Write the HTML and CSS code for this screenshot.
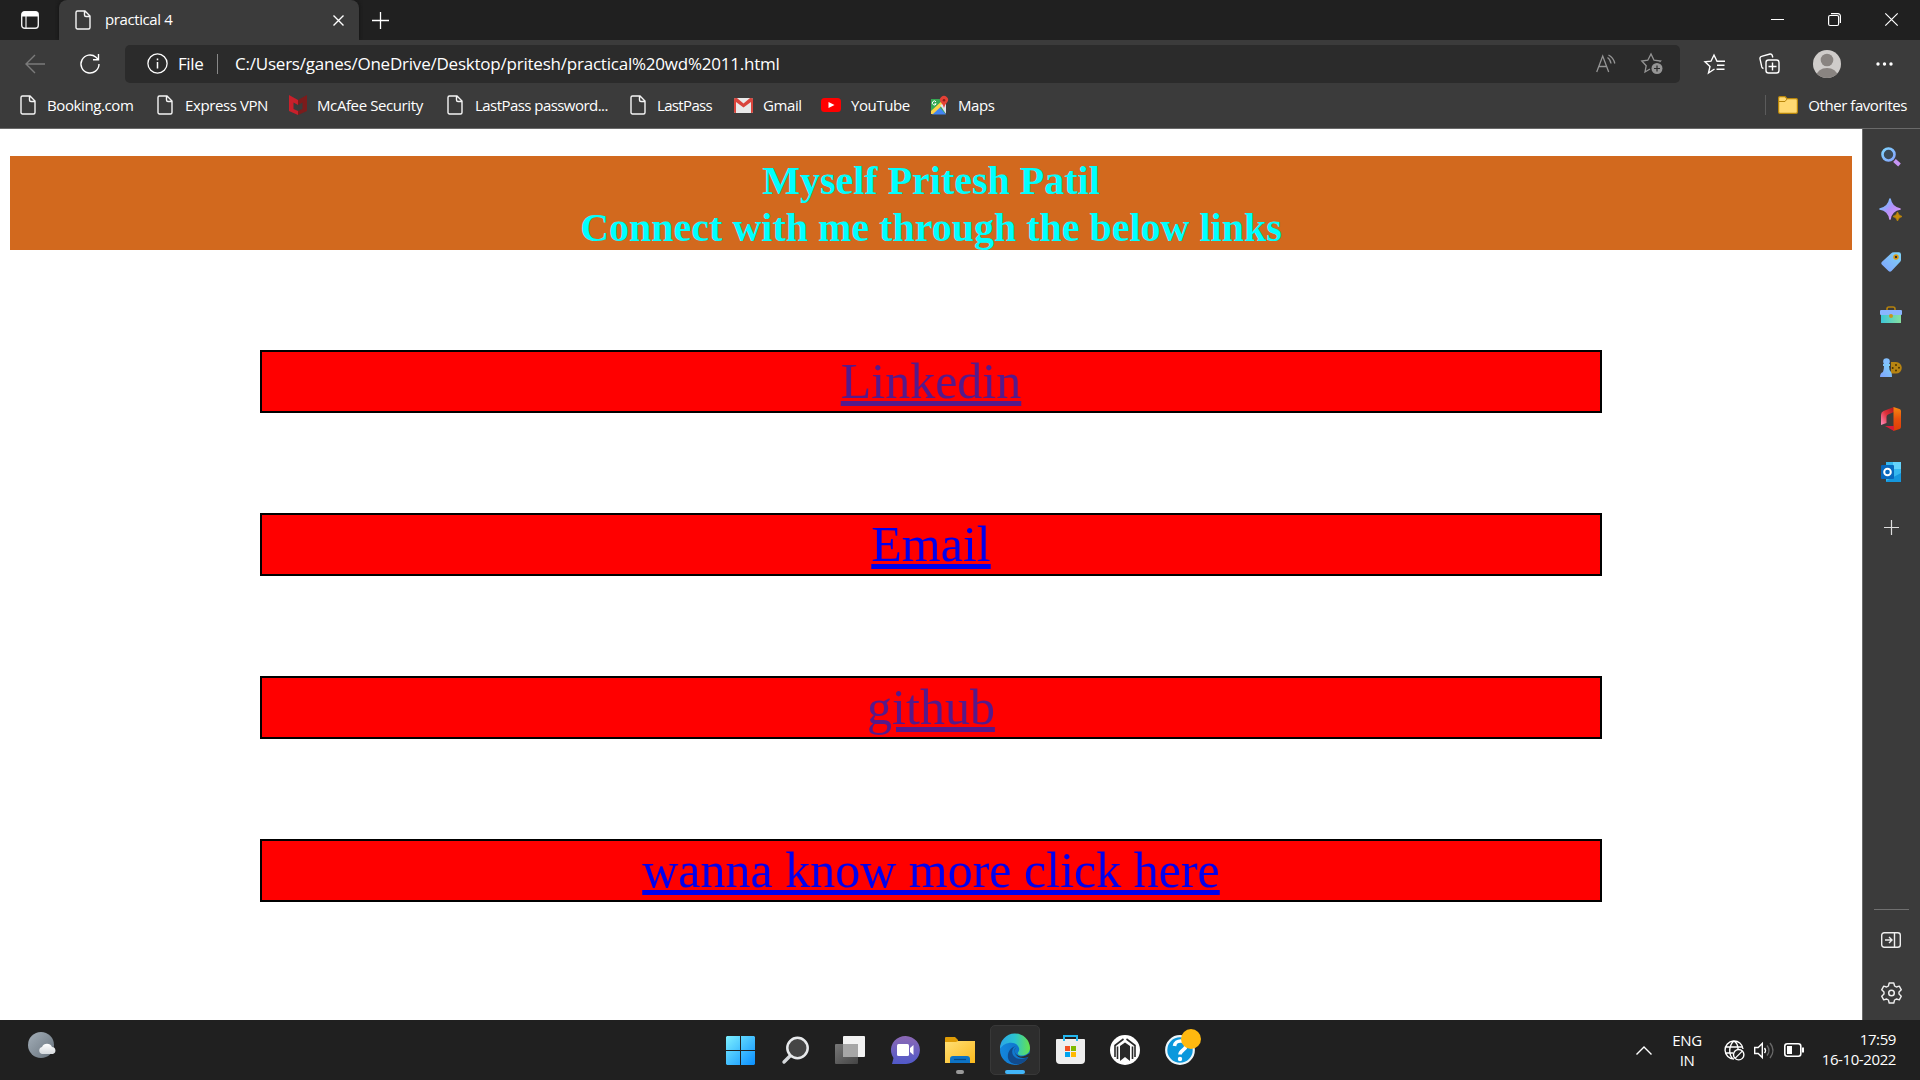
FILE: index.html
```html
<!DOCTYPE html>
<html lang="en">
<head>
<meta charset="utf-8">
<title>practical 4</title>
<link rel="stylesheet" href="styles.css">
</head>
<body>
<svg class="defs" aria-hidden="true">
  <defs>
    <linearGradient id="win" x1="0" y1="0" x2="1" y2="1"><stop offset="0" stop-color="#7df0ff"/><stop offset="1" stop-color="#0a8fff"/></linearGradient>
    <linearGradient id="lens" x1="0" y1="0" x2="1" y2="1"><stop offset="0" stop-color="#7fd4ff"/><stop offset="1" stop-color="#86a4ff"/></linearGradient>
    <linearGradient id="violet" x1="0" y1="0" x2="1" y2="1"><stop offset=".15" stop-color="#6fc4ff"/><stop offset=".5" stop-color="#b490fb"/><stop offset="1" stop-color="#e79bf5"/></linearGradient>
    <linearGradient id="blue" x1="1" y1="0" x2="0" y2="1"><stop offset="0" stop-color="#7fd4f5"/><stop offset="1" stop-color="#7fa2ff"/></linearGradient>
    <linearGradient id="teal"><stop offset="0" stop-color="#3cc6d8"/><stop offset="1" stop-color="#86e0a0"/></linearGradient>
    <linearGradient id="chat" x1="0" y1="0" x2="0" y2="1"><stop offset="0" stop-color="#8c68b4"/><stop offset="1" stop-color="#5059c9"/></linearGradient>
    <linearGradient id="folder" x1="0" y1="0" x2="1" y2="1"><stop offset="0" stop-color="#ffdf75"/><stop offset="1" stop-color="#fbb91c"/></linearGradient>
    <linearGradient id="edgeTop"><stop offset="0" stop-color="#2ba5e8"/><stop offset=".5" stop-color="#2bc4cf"/><stop offset="1" stop-color="#66e34b"/></linearGradient>
    <linearGradient id="edgeLow"><stop offset="0" stop-color="#1488de"/><stop offset="1" stop-color="#0c68c0"/></linearGradient>
    <linearGradient id="officeLeft" x1="1" y1="0" x2="0" y2="1"><stop offset="0" stop-color="#a8151d"/><stop offset=".5" stop-color="#e0323c"/><stop offset="1" stop-color="#ff8fc0"/></linearGradient>
    <linearGradient id="officeRight" x1="0" y1="0" x2="0" y2="1"><stop offset="0" stop-color="#f58a10"/><stop offset=".5" stop-color="#e8500c"/><stop offset="1" stop-color="#de3c06"/></linearGradient>
    <linearGradient id="moon" x1="0" y1="0" x2="1" y2="1"><stop offset="0" stop-color="#a4afb9"/><stop offset="1" stop-color="#66717b"/></linearGradient>
    <linearGradient id="white" x1="0" y1="0" x2="0" y2="1"><stop offset="0" stop-color="#fff"/><stop offset="1" stop-color="#d5d9dd"/></linearGradient>
    <linearGradient id="grey" x1="0" y1="0" x2="1" y2="1"><stop offset="0" stop-color="#777"/><stop offset="1" stop-color="#444"/></linearGradient>
    <symbol id="doc" viewBox="0 0 16 20"><path d="M3 1h7l5 5v11.500a1.500 1.500 0 0 1-1.500 1.500h-11A1.500 1.500 0 0 1 1 17.500v-15A1.500 1.500 0 0 1 2.500 1zM9.500 1v4a1.500 1.500 0 0 0 1.500 1.500h4" fill="none" stroke="#f5f5f5" stroke-width="1.400"/></symbol>
  </defs>
</svg>
<header class="browser">
  <div class="titlebar">
    <svg class="tab-actions" width="18" height="18" viewBox="0 0 18 18"><rect x=".7" y=".7" width="16.600" height="16.600" rx="3" fill="none" stroke="#eee" stroke-width="1.400"/><path d="M1 3a2.500 2.500 0 0 1 2.500-2.500h11A2.500 2.500 0 0 1 17 3v2.500H1z" fill="#fff"/><path d="M5 5v12" stroke="#eee" stroke-width="1.200"/></svg>
    <div class="tab">
      <svg width="16" height="20"><use href="#doc"/></svg>
      <span class="tab-title">practical 4</span>
      <svg class="tab-close" width="11" height="11" viewBox="0 0 11 11"><path d="M.5.5l10 10M10.500.5l-10 10" stroke="#fff" stroke-width="1.400"/></svg>
    </div>
    <svg class="new-tab" width="17" height="17" viewBox="0 0 17 17"><path d="M8.500 0v17M0 8.500h17" stroke="#fff" stroke-width="1.300"/></svg>
    <div class="window-buttons">
      <svg width="13" height="13" viewBox="0 0 13 13"><path d="M0 6.500h13" stroke="#fff"/></svg>
      <svg width="13" height="13" viewBox="0 0 13 13"><rect x=".6" y="2.500" width="10" height="10" rx="1.500" fill="none" stroke="#fff" stroke-width="1.200"/><path d="M3 .6h7a2.400 2.400 0 0 1 2.400 2.400v7" fill="none" stroke="#fff" stroke-width="1.200"/></svg>
      <svg width="13" height="13" viewBox="0 0 13 13"><path d="M.3.3l12.400 12.400M12.700.3L.3 12.700" stroke="#fff" stroke-width="1.200"/></svg>
    </div>
  </div>
  <div class="toolbar">
    <svg class="back" width="20" height="20" viewBox="0 0 20 20"><path d="M20 10H1M10 1l-9 9 9 9" fill="none" stroke="#7b7b7b" stroke-width="1.400"/></svg>
    <svg class="reload" width="20" height="20" viewBox="0 0 20 20"><path d="M19 10a9 9 0 1 1-3-6.700l2 2M18.500 0v5.700H13" fill="none" stroke="#fff" stroke-width="1.400"/></svg>
    <div class="address">
      <svg width="21" height="21" viewBox="0 0 21 21"><circle cx="10.500" cy="10.500" r="9.600" fill="none" stroke="#fff" stroke-width="1.300"/><path d="M10.500 9v6.500M10.500 5.500v1.700" stroke="#fff" stroke-width="1.500"/></svg>
      <span class="scheme">File</span>
      <span class="address-rule"></span>
      <span class="url">C:/Users/ganes/OneDrive/Desktop/pritesh/practical%20wd%2011.html</span>
      <svg class="read" width="20" height="19" viewBox="0 0 20 19"><path d="M.7 18L6.700 2l6 16M3 12.500h7.500M11.500 3.500q3 2 3.500 6M12.500 1q5 2.500 6.300 8.500" fill="none" stroke="#959595" stroke-width="1.300"/></svg>
      <svg class="star" width="22" height="21" viewBox="0 0 22 21"><path d="M9 16l-5 3 1.200-6.300L.8 8l6-.8L10 1l3 6.200 6.500.8-1 1" fill="none" stroke="#959595" stroke-width="1.300"/><circle cx="16" cy="15.500" r="5.500" fill="#959595"/><path d="M16 12.500v6M13 15.500h6" stroke="#2b2b2b" stroke-width="1.200"/></svg>
    </div>
    <svg class="favorites" width="21" height="20" viewBox="0 0 21 20"><path d="M10.500 15l-6 4 1.500-6.500-5-4.700 6-.6L10 1l3 6.200h8M13 11.200h7.500M12.500 15.200h8" fill="none" stroke="#fff" stroke-width="1.400"/></svg>
    <svg class="collections" width="21" height="21" viewBox="0 0 21 21"><rect x="7" y="7" width="13" height="13" rx="2.500" fill="none" stroke="#fff" stroke-width="1.400"/><path d="M13.500 9.500v8M9.500 13.500h8M4.500 15.500a2.500 2.500 0 0 1-1.700-1.600L1 5.800a2 2 0 0 1 1.500-2.400L11 1a2 2 0 0 1 2.200 1.300l.6 2.200" fill="none" stroke="#fff" stroke-width="1.400"/></svg>
    <svg class="avatar" width="28" height="28" viewBox="0 0 28 28"><clipPath id="face"><circle cx="14" cy="14" r="14"/></clipPath><g clip-path="url(#face)"><path fill="#cfccca" d="M0 0h28v28H0z"/><circle cx="14" cy="10" r="6.300" fill="#898481"/><ellipse cx="14" cy="26" rx="10.500" ry="8" fill="#898481"/></g></svg>
    <svg class="menu" width="17" height="4" viewBox="0 0 17 4"><path d="M2 2h0M8.500 2h0M15 2h0" stroke="#fff" stroke-width="3.400" stroke-linecap="round"/></svg>
  </div>
  <nav class="bookmarks">
    <div class="bookmark booking"><svg width="16" height="20"><use href="#doc"/></svg>Booking.com</div>
    <div class="bookmark express"><svg width="16" height="20"><use href="#doc"/></svg>Express VPN</div>
    <div class="bookmark mcafee"><svg width="18" height="20" viewBox="0 0 18 20"><path d="M0 0l9 5v5L4.500 7.500V14L9 16v4l-9-4z" fill="#c8202b"/><path d="M18 0L9 5v5l4.500-2.500V14L9 16v4l9-4z" fill="#7b1c1c"/></svg>McAfee Security</div>
    <div class="bookmark password"><svg width="16" height="20"><use href="#doc"/></svg>LastPass password...</div>
    <div class="bookmark lastpass"><svg width="16" height="20"><use href="#doc"/></svg>LastPass</div>
    <div class="bookmark gmail"><svg width="19" height="15" viewBox="0 0 19 15"><rect width="19" height="15" rx="1.500" fill="#e9e9e9"/><path d="M0 1.500Q0 0 1.500 0H3l6.500 5.500L16 0h1.500Q19 0 19 1.500v12q0 1.500-1.500 1.500H17V4L9.500 9.500 2 4v11h-.5Q0 15 0 13.500z" fill="#d9453d"/></svg>Gmail</div>
    <div class="bookmark youtube"><svg width="20" height="14" viewBox="0 0 20 14"><rect width="20" height="14" rx="3.500" fill="#f00"/><path d="M7.500 4l6 3-6 3z" fill="#fff"/></svg>YouTube</div>
    <div class="bookmark maps"><svg width="18" height="19" viewBox="0 0 18 19"><path d="M1 3h14v15H1z" fill="#34a853"/><path d="M8.500 10l7.500 8.500H2z" fill="#4285f4"/><path d="M1 18V15L14 3l2 3L3 18z" fill="#fbd24a"/><path d="M10 9l6-2v11z" fill="#dfe3ee"/><path d="M6 5.800a2 2 0 1 0 .2 2H4.500" fill="none" stroke="#fff"/><path d="M14 12q-.5-3-3-5.500a4 4 0 1 1 6 0Q14.500 9 14 12z" fill="#e44136"/><circle cx="14" cy="4.200" r="1.300" fill="#8b2019"/></svg>Maps</div>
    <div class="other"><svg width="20" height="18" viewBox="0 0 20 18"><path d="M.6 2a1.400 1.400 0 0 1 1.400-1.400h5L9 2.600h9A1.400 1.400 0 0 1 19.400 4v12a1.400 1.400 0 0 1-1.400 1.400H2A1.400 1.400 0 0 1 .6 16z" fill="#ffd972" stroke="#b8860b" stroke-width="1.200"/><path d="M1 5.500h6L9 3" fill="none" stroke="#b8860b"/></svg>Other favorites</div>
  </nav>
</header>
<div class="middle">
  <main class="page">
    <h1>Myself Pritesh Patil<br>Connect with me through the below links</h1>
    <div class="box"><a class="visited" href="#l">Linkedin</a></div>
    <div class="box"><a href="#e">Email</a></div>
    <div class="box"><a class="visited" href="#g">github</a></div>
    <div class="box"><a href="#m">wanna know more click here</a></div>
  </main>
  <aside class="sidebar">
    <div class="side-icon search"><svg width="20" height="20" viewBox="0 0 20 20"><path d="M13.500 13.500l5 4.500" stroke="#c694f5" stroke-width="4"/><circle cx="7.500" cy="7.500" r="6" fill="#3b4a56" stroke="url(#lens)" stroke-width="2.600"/></svg></div>
    <div class="side-icon"><svg width="22" height="22" viewBox="0 0 22 22"><path d="M10 0Q11.500 8.500 20 10 11.500 11.500 10 20 8.500 11.500 0 10 8.500 8.500 10 0z" fill="url(#violet)" stroke="url(#violet)" stroke-width="1.600" stroke-linejoin="round"/><path d="M17.500 13q.8 3.700 4.500 4.500-3.700.8-4.500 4.500-.8-3.700-4.500-4.500 3.700-.8 4.500-4.500z" fill="#c68b08" stroke="#c68b08" stroke-width=".8"/></svg></div>
    <div class="side-icon"><svg width="20" height="20" viewBox="0 0 20 20"><path d="M10 1.500Q11 .3 13 .3h4.500A2.300 2.300 0 0 1 20 2.500V8q0 1.200-1 2l-8.500 9Q9 20.500 7.500 19L.8 12.500Q-.3 11.300.8 10z" fill="url(#blue)"/><circle cx="15" cy="5" r="2" fill="#333" stroke="#e29a08" stroke-width="1.500"/></svg></div>
    <div class="side-icon"><svg width="22" height="17" viewBox="0 0 22 17"><path d="M7 5V3q0-2 2-2h4q2 0 2 2v2" fill="none" stroke="#b5810c" stroke-width="1.600"/><path d="M1 8h20v9H1z" fill="url(#teal)"/><rect y="4" width="22" height="5" rx="1" fill="#8ab5ff"/><circle cx="11" cy="10" r="2" fill="#c99619"/></svg></div>
    <div class="side-icon"><svg width="22" height="19" viewBox="0 0 22 19"><path d="M11 4h5a5.800 5.800 0 0 1 0 11.600h-5z" fill="#b78412"/><path d="M12.700 10h0M16 7h0M16 12.500h0M19 9.700h0" stroke="#4b3300" stroke-width="2" stroke-linecap="round"/><circle cx="6.500" cy="3.500" r="3.300" fill="#83bfff"/><path d="M3 6h7v2H9q0 4 2 6 1 1 1 5H0q0-4 3-5 1-3 1-6H3z" fill="url(#blue)"/></svg></div>
    <div class="side-icon"><svg width="20" height="24" viewBox="0 0 20 24"><path d="M0 8q0-3 2.500-4L13 0v5L7 7.500q-1.500.7-1.500 2.500v6L0 18z" fill="url(#officeLeft)"/><path d="M12.500 0l6 2Q20 2.500 20 4v16q0 1.500-1.500 2l-6 2z" fill="url(#officeRight)"/><path d="M4 19h9v5z" fill="#d81c38"/></svg></div>
    <div class="side-icon"><svg width="20" height="20" viewBox="0 0 20 20"><path d="M5 0h15v20H5z" fill="#35b8ef"/><path d="M12 0h8v7h-8z" fill="#64d2fb"/><path d="M5 19l15-8v9H5z" fill="#1597de"/><rect y="3" width="13" height="14" rx="1" fill="#0868bd"/><circle cx="6.500" cy="10" r="3.300" fill="none" stroke="#fff" stroke-width="2"/></svg></div>
    <div class="side-icon add"><svg width="15" height="15" viewBox="0 0 15 15"><path d="M7.500 0v15M0 7.500h15" stroke="#ddd" stroke-width="1.200"/></svg></div>
    <hr>
    <div class="side-icon panel"><svg width="20" height="16" viewBox="0 0 20 16"><rect x=".7" y=".7" width="18.600" height="14.600" rx="2.500" fill="none" stroke="#eee" stroke-width="1.400"/><path d="M13.500 1v14M4 8h7M8 5l3 3-3 3" fill="none" stroke="#eee" stroke-width="1.400"/></svg></div>
    <div class="side-icon settings"><svg width="21" height="22" viewBox="0 0 21 22"><path d="M8.200 1h4.600l.8 3 1.700 1 3-.9 2 3.700L18 10v2l2.300 2.200-2 3.700-3-.9-1.700 1-.8 3H8.200l-.8-3-1.700-1-3 .9-2-3.700L3 12v-2L.7 7.800l2-3.700 3 .9 1.700-1z" fill="none" stroke="#eee" stroke-width="1.400" stroke-linejoin="round"/><circle cx="10.500" cy="11" r="2.800" fill="none" stroke="#eee" stroke-width="1.500"/></svg></div>
  </aside>
</div>
<footer class="taskbar">
  <svg class="weather" width="28" height="27" viewBox="0 0 28 27"><circle cx="13" cy="13" r="13" fill="url(#moon)"/><path d="M14 22a3.600 3.600 0 0 1 0-7 5.500 5.500 0 0 1 10 0 3.600 3.600 0 0 1 1 7z" fill="url(#white)"/></svg>
  <div class="apps">
    <div class="app"><svg width="29" height="29" viewBox="0 0 29 29"><path d="M1 0h13v14H0V1zM15 0h13l1 1v13H15zM0 15h14v14H1l-1-1zM15 15h14v13l-1 1H15z" fill="url(#win)"/></svg></div>
    <div class="app"><svg width="27" height="28" viewBox="0 0 27 28"><path d="M8.500 19.500L2 26" stroke="#d5d8db" stroke-width="3.400" stroke-linecap="round"/><circle cx="15.500" cy="12" r="10.200" fill="#454545" stroke="#e7e9eb" stroke-width="2.500"/></svg></div>
    <div class="app"><svg width="30" height="28" viewBox="0 0 30 28"><rect y="8" width="23" height="20" rx="1" fill="url(#grey)"/><rect x="8" width="22" height="21" rx="1" fill="#f2f2f2"/><path d="M8 8h15v13H8z" fill="#a6a6a6"/></svg></div>
    <div class="app"><svg width="29" height="29" viewBox="0 0 29 29"><path d="M1 28l1.500-6A14.500 14 0 1 1 15 28z" fill="url(#chat)"/><rect x="6" y="8" width="12" height="12" rx="1.500" fill="#fff"/><path d="M19 12l3.500-3v10L19 16z" fill="#fff"/></svg></div>
    <div class="app"><svg width="30" height="27" viewBox="0 0 30 27"><path d="M0 1q0-1 1-1h9l3 3v6H0z" fill="#df9c06"/><path d="M0 5h11l2-1h17v22H0z" fill="url(#folder)"/><path d="M5 26v-4q0-3 3-3h14q3 0 3 3v4z" fill="#0d73c5"/><path d="M9 22.500h12" stroke="#074985" stroke-width="1.200"/></svg><span class="running"></span></div>
    <div class="app active"><svg width="30" height="30" viewBox="0 0 30 30"><circle cx="15" cy="15" r="15" fill="url(#edgeLow)"/><path d="M0 14A15 15 0 0 1 30 13c0 8-10 9-12 6-1-2 2-2 1-6C17 6 5 6 0 14z" fill="url(#edgeTop)"/><path d="M16 11c-3 1-5 5-3 9 3 5 10 5 15 2-5 10-18 9-20 1-1-6 3-11 8-12z" fill="#114b8d"/><path d="M17 12c-3 2-3 6 0 8 4 3 9 1 11-1l3-1v3l-3 1c-5 2-11 1-13-4-1-3 0-5 2-6z" fill="#2d2d2d"/></svg><span class="running"></span></div>
    <div class="app"><svg width="29" height="30" viewBox="0 0 29 30"><path d="M8 6V1h13v5" fill="none" stroke="#24b7ef" stroke-width="2"/><path d="M0 5q0-1 1-1h27q1 0 1 1v20q0 4-4 4H4q-4 0-4-4z" fill="#eee"/><path d="M8 6V4M21 6V4" stroke="#24b7ef" stroke-width="2"/><path d="M9 11h5v5H9z" fill="#f25022"/><path d="M15 11h5v5h-5z" fill="#7fba00"/><path d="M9 17h5v5H9z" fill="#00a4ef"/><path d="M15 17h5v5h-5z" fill="#ffb900"/></svg></div>
    <div class="app"><svg width="30" height="30" viewBox="0 0 30 30"><circle cx="15" cy="15" r="15" fill="#fff"/><path d="M10 26V11l5-3.500 5 3.500v15l-5-4z" fill="#2a2a2a"/><path d="M5 22V10.500L13.500 4M7.500 24V11.500M25 22V10.500L16.500 4M22.500 24V11.500" fill="none" stroke="#2a2a2a" stroke-width="1.600"/></svg></div>
    <div class="app"><svg width="30" height="30" viewBox="0 0 30 30"><circle cx="15" cy="15" r="13.800" fill="#0b98dc" stroke="#eef6fa" stroke-width="2.200"/><path d="M9.500 11c.5-7 12-6.500 11.500 0-.3 4-6 4-6 8.500" fill="none" stroke="#fff" stroke-width="3.600"/><circle cx="15" cy="24" r="2.200" fill="#fff"/></svg><span class="badge"></span></div>
  </div>
  <div class="tray">
    <svg class="chevron" width="16" height="9" viewBox="0 0 16 9"><path d="M.5 8.500L8 1l7.500 7.500" fill="none" stroke="#fff" stroke-width="1.400"/></svg>
    <div class="language">ENG<br>IN</div>
    <svg class="globe" width="21" height="21" viewBox="0 0 21 21"><path d="M10 19A9 9 0 1 1 19 9M1 7h18M1 13h8M9 19C4 14 5 5 10 1c3 2 4 5 4 8" fill="none" stroke="#fff" stroke-width="1.400"/><circle cx="14.700" cy="14.700" r="5.200" fill="#202020" stroke="#fff" stroke-width="1.400"/><path d="M11 18.400l7.300-7.300" stroke="#fff" stroke-width="1.300"/></svg>
    <svg class="speaker" width="20" height="17" viewBox="0 0 20 17"><path d="M.7 5.500h3.500L8.300 1.500v14l-4.100-4H.7zM10.500 6q2 2.500 0 5" fill="none" stroke="#fff" stroke-width="1.400"/><path d="M13 3.500q4 5 0 10M16 1q6 7.500 0 15" fill="none" stroke="#696969" stroke-width="1.400"/></svg>
    <svg class="battery" width="20" height="14" viewBox="0 0 20 14"><rect x=".8" y=".8" width="16" height="12.400" rx="2.500" fill="none" stroke="#fff" stroke-width="1.600"/><path d="M3 3h5v8H3zM18 4.500h2v5h-2z" fill="#fff"/></svg>
    <div class="clock"><div class="time">17:59</div><div class="date">16-10-2022</div></div>
  </div>
</footer>
</body>
</html>
```
FILE: styles.css
```css
* { box-sizing: border-box; }
body { margin: 0; width: 1920px; height: 1080px; overflow: hidden; display: flex; flex-direction: column; background: #fff; color: #fff; font-family: "Open Sans", "Noto Sans", sans-serif; font-size: 15px; letter-spacing: -.4px; }
svg { display: block; flex: none; overflow: visible; }
.defs { position: absolute; width: 0; height: 0; }
.browser { height: 129px; flex: none; background: #3b3b3b; border-bottom: 1px solid #6a6a6a; white-space: nowrap; }
.titlebar { height: 40px; display: flex; align-items: center; background: #202020; }
.tab-actions { margin: 0 20px 0 21px; }
.tab { width: 300px; height: 40px; display: flex; align-items: center; padding: 0 15px 0 16px; background: #3b3b3b; border-radius: 8px 8px 0 0; box-shadow: 0 0 4px #111; clip-path: inset(0 -4px 0 -4px); }
.tab-title { margin-left: 14px; padding-bottom: 2px; }
.tab-close { margin-left: auto; }
.new-tab { margin-left: 13px; }
.window-buttons { display: flex; gap: 44px; margin: 0 22px 0 auto; padding-bottom: 1px; }
.toolbar { height: 48px; display: flex; align-items: center; padding-bottom: 1px; }
.back { margin-left: 25px; }
.reload { margin: 0 25px 0 35px; }
.address { width: 1555px; height: 38px; display: flex; align-items: center; padding-left: 22px; background: #2b2b2b; border-radius: 5px; font-size: 17px; }
.scheme { margin-left: 10px; width: 39px; padding-bottom: 1px; }
.address-rule { width: 1px; height: 20px; background: #888; margin-right: 17px; }
.url { letter-spacing: -.22px; padding-bottom: 1px; }
.read { margin: 0 25px 0 auto; }
.star { margin-right: 17px; }
.favorites { margin-left: 24px; }
.collections { margin-left: 34px; }
.avatar { margin-left: 33px; }
.menu { margin-left: 35px; }
.bookmarks { height: 40px; display: flex; align-items: center; padding: 0 13px 6px 20px; }
.bookmark { display: flex; align-items: center; gap: 11px; }
.booking { width: 137px; }
.express { width: 132px; gap: 12px; }
.mcafee { width: 158px; gap: 10px; }
.password { width: 183px; gap: 12px; letter-spacing: -.55px; }
.lastpass { width: 104px; letter-spacing: -.65px; }
.gmail { width: 87px; gap: 10px; }
.youtube { width: 109px; gap: 10px; }
.maps { gap: 10px; }
.other { margin-left: auto; height: 20px; border-left: 1px solid #5b5b5b; padding-left: 12px; display: flex; gap: 10px; align-items: center; letter-spacing: -.45px; }

.middle { height: 891px; flex: none; display: flex; }
.page { width: 1862px; padding: 27px 10px 0; background: #fff; font-family: "Liberation Serif", serif; letter-spacing: 0; }
h1 { margin: 0 0 100px; height: 94px; padding-top: 1px; background: chocolate; color: aqua; text-align: center; font-size: 40px; line-height: 47px; }
.box { height: 63px; margin: 0 250px 100px; border: 2px solid #000; background: red; text-align: center; font-size: 50px; line-height: 59px; }
.box a { color: #00e; text-decoration-thickness: 5px; text-underline-offset: 3px; }
.box a.visited { color: #551a8b; }
.sidebar { width: 58px; background: #3b3b3b; border-left: 1px solid #6a6a6a; display: flex; flex-direction: column; align-items: flex-start; }
.side-icon { width: 56px; height: 52.300px; flex: none; display: flex; align-items: center; justify-content: center; }
.search { height: 55px; }
.add { height: 60px; }
.sidebar hr { width: 35px; height: 1px; margin: auto 0 4px 11px; border: 0; background: #707070; }
.side-icon.panel { height: 52px; }
.side-icon.settings { height: 54px; padding-bottom: 1px; }

.taskbar { height: 60px; flex: none; display: grid; grid-template-columns: 715px 1fr auto; align-items: center; background: #202020; }
.weather { margin: -10px 0 0 28px; }
.apps { display: flex; gap: 5px; }
.app { position: relative; width: 50px; height: 50px; display: flex; align-items: center; justify-content: center; border-radius: 5px; }
.app.active { background: #2d2d2d; border: 1px solid #383838; }
.running { position: absolute; bottom: 1px; left: 21px; width: 8px; height: 4px; border-radius: 2px; background: #999; }
.active .running { left: 14px; bottom: 0; width: 20px; background: #42b5f8; }
.badge { position: absolute; width: 20px; height: 20px; left: 26px; top: 4px; border-radius: 50%; background: #ffb90f; }
.tray { display: flex; align-items: center; padding-right: 24px; line-height: 20px; }
.language { width: 30px; margin: 0 22px 0 20px; text-align: center; }
.globe { margin-right: 9px; }
.speaker { margin-right: 10px; }
.clock { width: 92px; text-align: right; padding-bottom: 2px; }
```
